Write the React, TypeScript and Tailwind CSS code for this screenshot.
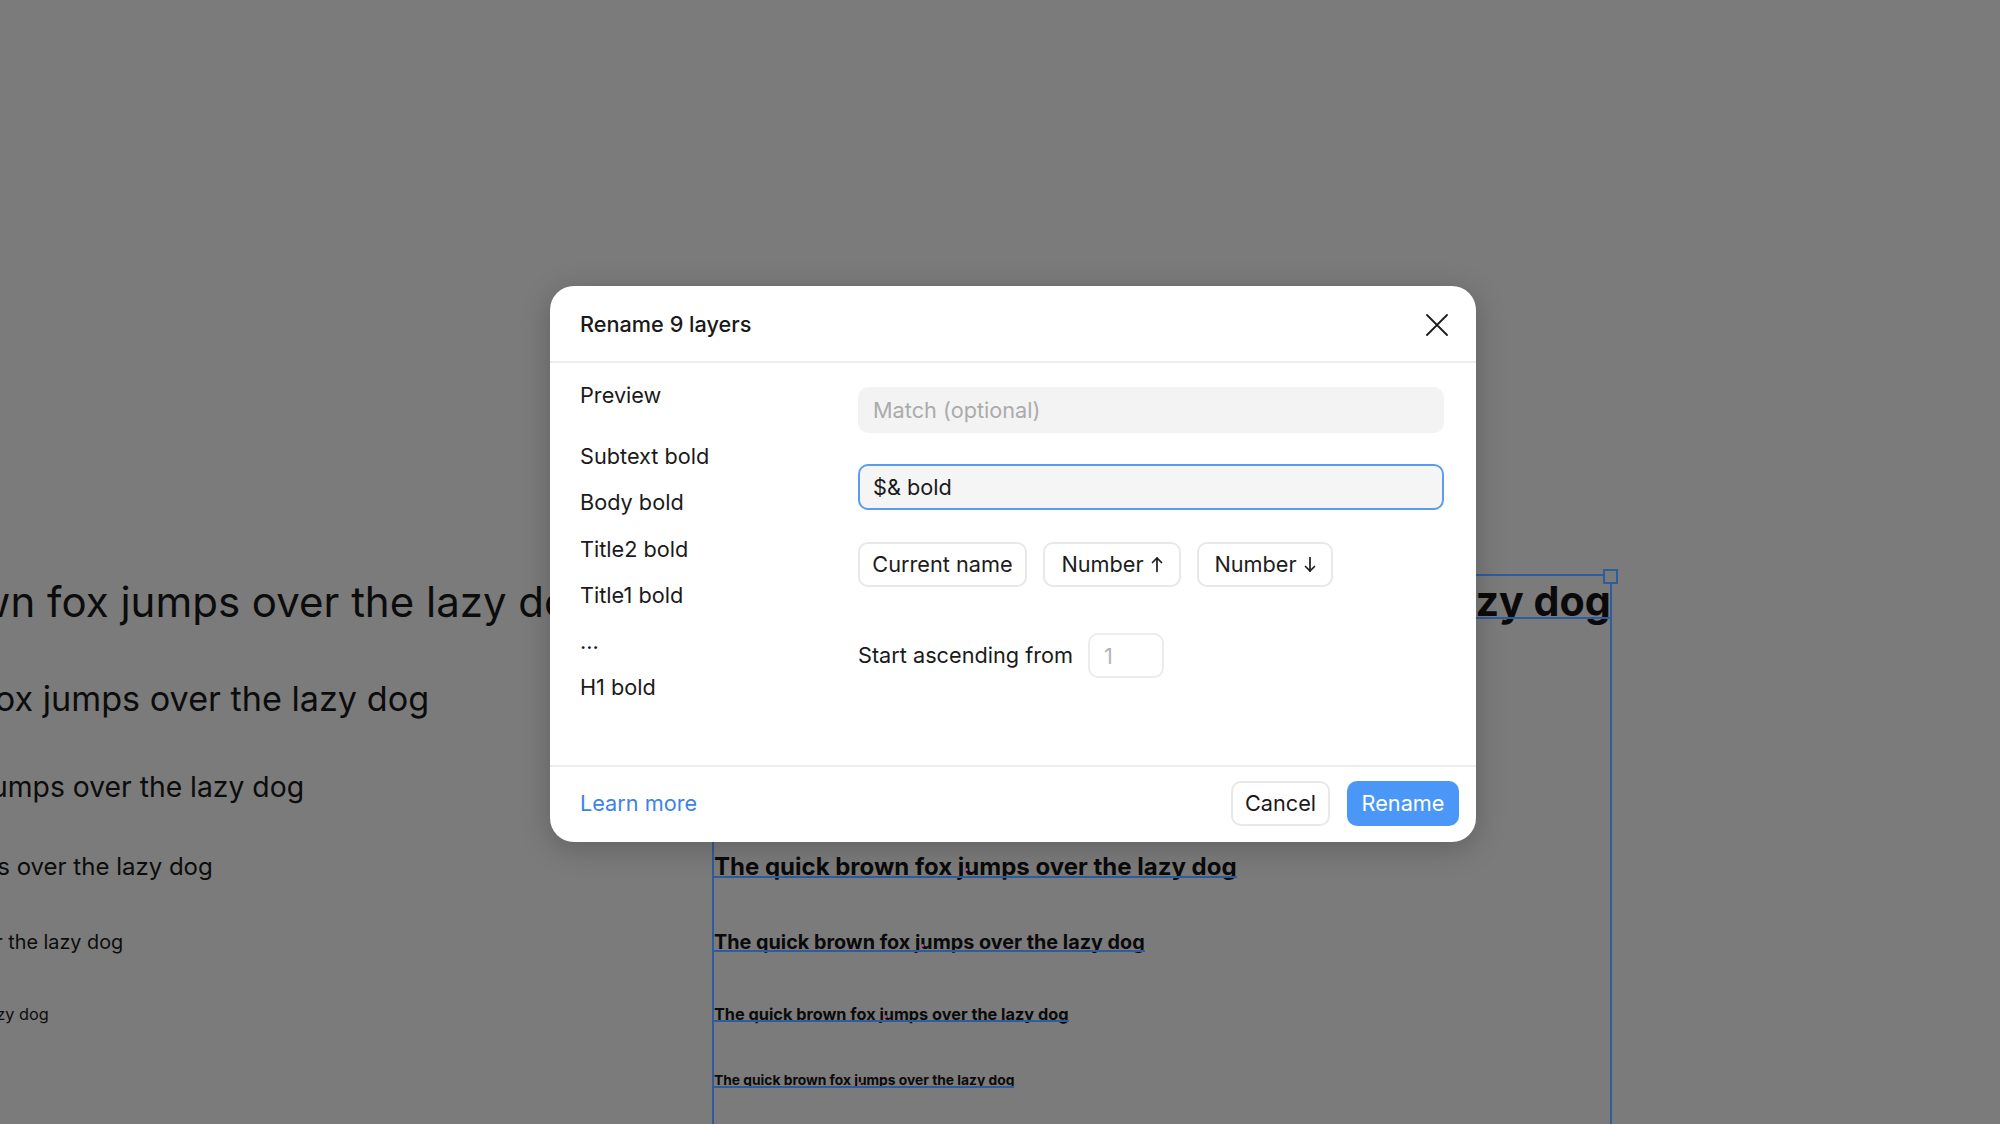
import React from 'react';

const SENTENCE = 'The quick brown fox jumps over the lazy dog';

// canvas layers behind the modal: [fontSize, baseline y]
const regularLines: [number, number][] = [
  [42, 617],
  [34.2, 712],
  [28.3, 797],
  [24, 876],
  [19.8, 950],
  [16.3, 1020],
];

const boldLines: [number, number][] = [
  [41.2, 617],
  [34.2, 712],
  [28.3, 797],
  [24, 876],
  [19.8, 950],
  [16.3, 1020],
  [13.8, 1086],
];

const previewItems = ['Subtext bold', 'Body bold', 'Title2 bold', 'Title1 bold', '...', 'H1 bold'];

const ArrowUp = () => (
  <svg width="12" height="17" viewBox="0 0 12 17" fill="none" stroke="currentColor" strokeWidth="1.7" strokeLinecap="round" strokeLinejoin="round">
    <path d="M6 15.5V2" />
    <path d="M1.5 6.5L6 2l4.5 4.5" />
  </svg>
);

const ArrowDown = () => (
  <svg width="12" height="17" viewBox="0 0 12 17" fill="none" stroke="currentColor" strokeWidth="1.7" strokeLinecap="round" strokeLinejoin="round">
    <path d="M6 1.5V15" />
    <path d="M1.5 10.5L6 15l4.5-4.5" />
  </svg>
);

const Canvas: React.FC = () => (
  <>
    {regularLines.map(([size, base], i) => (
      <div
        key={'r' + i}
        className="absolute left-[-297px] whitespace-nowrap leading-none text-[#0c0c0c]"
        style={{ fontSize: size, top: base - size * 0.864 }}
      >
        {SENTENCE}
      </div>
    ))}

    {/* selection frame */}
    <div className="absolute left-[712px] top-[574px] w-[900px] h-[600px] border-2 border-[#2f5c9c]" />
    <div className="absolute left-[1603px] top-[569px] w-[15px] h-[15px] border-2 border-[#2f5c9c] bg-[#7b7b7b]" />

    {boldLines.map(([size, base], i) => (
      <div
        key={'b' + i}
        className="absolute left-[714px] whitespace-nowrap leading-none font-bold text-[#0a0a0a]"
        style={{ fontSize: size, top: base - size * 0.864 }}
      >
        <span className="relative inline-block">
          {SENTENCE}
          <span className="absolute left-[-2px] right-0 top-[0.864em] h-[2px] bg-[#2f5c9c]" />
          {/* little text-cursor marker inside "jumps" */}
          <span className="absolute left-[10.45em] top-[0.55em] w-[3px] h-[3px] rounded-full bg-[#c0508a]" />
        </span>
      </div>
    ))}
  </>
);

const Chip: React.FC<{ className: string; children: React.ReactNode }> = ({ className, children }) => (
  <button className={`h-[45px] flex items-center justify-center gap-[7px] rounded-[10px] border-2 border-[#e8e8e8] bg-white text-[#1c1c1c] ${className}`}>
    {children}
  </button>
);

export default function App() {
  return (
    <div className="relative w-[2000px] h-[1124px] overflow-hidden bg-[#7b7b7b] font-[Inter,sans-serif]">
      <Canvas />

      <div className="absolute left-[550px] top-[286px] w-[926px] h-[556px] bg-white rounded-[24px] shadow-[0_6px_30px_rgba(0,0,0,0.22)] flex flex-col text-[21.7px] text-[#1a1a1a]">
        <div className="h-[77px] shrink-0 flex items-center justify-between pl-[30px] pr-[28px] pt-[2px] border-b-2 border-[#ececec]">
          <span className="font-medium">Rename 9 layers</span>
          <svg width="22" height="22" viewBox="0 0 22 22" fill="none" stroke="#1c1c1c" strokeWidth="1.8" strokeLinecap="round">
            <path d="M1 1l20 20M21 1L1 21" />
          </svg>
        </div>

        <div className="flex-1 flex pl-[30px] pr-[32px]">
          <div className="w-[278px] shrink-0 pt-[17px] flex flex-col">
            <div className="h-[30px] leading-[30px]">Preview</div>
            <div className="mt-[31px] flex flex-col gap-[16.3px]">
              {previewItems.map(item => (
                <div key={item} className="h-[30px] leading-[30px]">{item}</div>
              ))}
            </div>
          </div>

          <div className="flex-1 pt-[24px] flex flex-col">
            <input
              placeholder="Match (optional)"
              className="h-[46px] rounded-[10px] bg-[#f3f3f3] px-[15px] outline-none placeholder:text-[#ababab]"
            />
            <input
              defaultValue="$& bold"
              className="mt-[31px] h-[46px] rounded-[10px] bg-[#f5f5f5] border-2 border-[#5b9bf2] px-[13px] outline-none text-[#1a1a1a]"
            />
            <div className="mt-[32px] flex gap-[16px]">
              <Chip className="w-[169px]">Current name</Chip>
              <Chip className="w-[138px]">Number <ArrowUp /></Chip>
              <Chip className="w-[136px]">Number <ArrowDown /></Chip>
            </div>
            <div className="mt-[46px] flex items-center gap-[15px]">
              <span>Start ascending from</span>
              <input
                placeholder="1"
                className="w-[76px] h-[45px] rounded-[10px] border-2 border-[#ececec] px-[14px] outline-none placeholder:text-[#b5b5b5]"
              />
            </div>
          </div>
        </div>

        <div className="h-[77px] shrink-0 flex items-start justify-between pl-[30px] pr-[17px] pt-[14px] border-t-2 border-[#ececec]">
          <a className="h-[45px] flex items-center text-[#3d83e6]">Learn more</a>
          <div className="flex gap-[17px]">
            <button className="w-[99px] h-[45px] rounded-[10px] border-2 border-[#e8e8e8] bg-white">Cancel</button>
            <button className="w-[112px] h-[45px] rounded-[10px] bg-[#4a97f7] text-white">Rename</button>
          </div>
        </div>
      </div>
    </div>
  );
}
